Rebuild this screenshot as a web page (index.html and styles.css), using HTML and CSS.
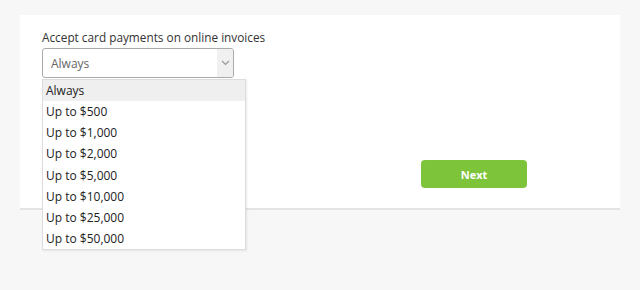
FILE: index.html
```html
<!DOCTYPE html>
<html lang="en">
<head>
  <meta charset="UTF-8" />
  <title>Card payments</title>
  <link rel="stylesheet" href="styles.css">
</head>
<body>

  <div class="card">
    <div class="field">
      <label class="field-label">Accept card payments on online invoices</label>
      <div class="select-wrap">
        <div class="select">
          <span class="select-value">Always</span>
          <span class="select-arrow">
            <svg width="9" height="6" viewBox="0 0 9 6"><path d="M1 1l3.5 3.5L8 1" fill="none" stroke="#999" stroke-width="1.2"/></svg>
          </span>
        </div>

        <!-- open dropdown -->
        <ul class="options">
          <li class="active">Always</li>
          <li>Up to $500</li>
          <li>Up to $1,000</li>
          <li>Up to $2,000</li>
          <li>Up to $5,000</li>
          <li>Up to $10,000</li>
          <li>Up to $25,000</li>
          <li>Up to $50,000</li>
        </ul>
      </div>
    </div>

    <div class="actions">
      <button class="next-btn">Next</button>
    </div>
  </div>

</body>
</html>
```

FILE: styles.css
```css
html, body {
  height: 100%;
}

body {
  margin: 0;
  padding: 15px 20px;
  box-sizing: border-box;
  background: #f7f7f7;
  font-family: "Open Sans", Arial, sans-serif;
  color: #333;
}

.card {
  background: white;
  height: 179px;
  padding: 14px 22px 0;
  border-bottom: 2px solid #e4e4e4;
}

.field-label {
  display: block;
  font-size: 11.8px;
  line-height: 16px;
  color: #333;
  margin-bottom: 3px;
}

.select-wrap {
  position: relative;
  width: 192px;
}

.select {
  display: flex;
  align-items: stretch;
  height: 28px;
  border: 1px solid #aaa;
  border-radius: 3px;
  overflow: hidden;
}

.select-value {
  flex: 1;
  padding-left: 8px;
  font-size: 12px;
  line-height: 29px;
  color: #666;
}

.select-arrow {
  width: 16px;
  background: #f0f0f0;
  display: flex;
  align-items: center;
  justify-content: center;
}

.options {
  position: absolute;
  top: 31px;
  left: 0;
  width: 202px;
  margin: 0;
  padding: 0;
  list-style: none;
  background: white;
  border: 1px solid #dcdcdc;
  box-shadow: 1px 1px 2px rgba(0,0,0,0.08);
  z-index: 10;
}

.options li {
  height: 21.15px;
  line-height: 22px;
  padding-left: 3px;
  font-size: 12px;
  color: #222;
}

.options li.active {
  background: #efefef;
}

.actions {
  padding-left: 379px;
  margin-top: 82px;
}

.next-btn {
  width: 106px;
  height: 28px;
  background: #7dc43a;
  color: white;
  border: none;
  border-radius: 4px;
  font-family: "Open Sans", Arial, sans-serif;
  font-size: 11px;
  font-weight: bold;
  cursor: pointer;
}
```
